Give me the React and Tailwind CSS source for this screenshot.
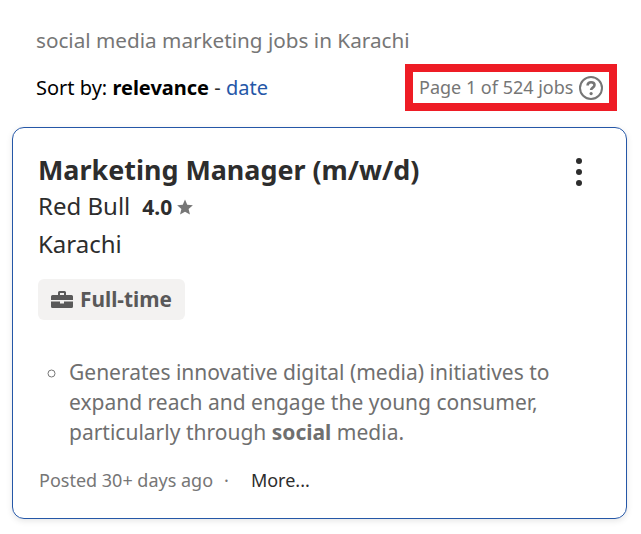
import React from "react";

const font = { fontFamily: '"Noto Sans", sans-serif' };

export default function App() {
  return (
    <div style={font} className="w-[641px] h-[534px] bg-white overflow-hidden pt-[25px]">
      <div className="pl-[36px] text-[20.7px] leading-[30px] text-[#767676]">social media marketing jobs in Karachi</div>
      <div className="flex items-center justify-between pl-[36px] pr-[24px] mt-[9px] h-[47px]">
        <div className="text-[20px] leading-[30px] text-[#000000]">
          Sort by: <b className="font-bold">relevance</b> <span className="text-[#2d2d2d]">-</span> <span className="text-[#2557a7]">date</span>
        </div>
        <div className="w-[212px] h-[47px] border-[8px] border-[#ee1c25] flex items-center pl-[6px] gap-[5px] text-[18px] text-[#767676]">
          <span>Page 1 of 524 jobs</span>
          <svg width="26" height="26" viewBox="0 0 26 26" fill="none">
            <circle cx="13" cy="13" r="11" stroke="#767676" strokeWidth="2" />
            <path d="M9.6 10.4c0-2 1.5-3.2 3.5-3.2s3.4 1.2 3.4 2.9c0 2.6-3.4 2.5-3.4 5" stroke="#767676" strokeWidth="2.6" fill="none" />
            <circle cx="13.1" cy="18.6" r="1.6" fill="#767676" />
          </svg>
        </div>
      </div>
      <div className="mt-[16px] ml-[12px] w-[615px] h-[392px] border border-[#2557a7] rounded-[12px] shadow-[0_2px_6px_rgba(0,0,0,0.1)] pl-[25px] pr-[24px] relative">
        <div className="text-[26.900px] leading-[36px] font-bold text-[#2d2d2d] mt-[24px]">Marketing Manager (m/w/d)</div>
        <div className="flex items-center h-[36px] text-[#2d2d2d] mt-[1px]">
          <span className="text-[24px] -mt-[2px]">Red Bull</span>
          <span className="text-[21px] font-bold ml-[12px] mt-[1px]">4.0</span>
          <svg className="ml-[4px]" width="18" height="18" viewBox="0 0 24 24" fill="#767676">
            <path d="M12 2l3 7 7.5.7-5.7 5 1.8 7.4L12 18.2 5.4 22.100l1.800-7.400-5.700-5L9 9z" />
          </svg>
        </div>
        <div className="text-[24px] leading-[36px] text-[#2d2d2d] mt-[1px]">Karachi</div>
        <div className="mt-[17px] w-[147px] h-[41px] bg-[#f3f2f1] rounded-[6px] flex items-center pl-[13px] gap-[7px] text-[20.800px] font-bold text-[#595959]">
          <svg width="22" height="20" viewBox="0 0 22 20" fill="#595959">
            <path d="M7 2.500A1.500 1.500 0 0 1 8.500 1h5A1.500 1.500 0 0 1 15 2.500V5h5.500A1.500 1.500 0 0 1 22 6.500V10H0V6.500A1.500 1.500 0 0 1 1.500 5H7zM9 3v2h4V3z" />
            <path d="M0 11.500h9V13.500h4V11.500h9v5A1.500 1.500 0 0 1 20.500 18h-19A1.500 1.500 0 0 1 0 16.500z" />
          </svg>
          <span>Full-time</span>
        </div>
        <ul className="mt-[37px] pl-[31px] pr-[40px] list-[circle] text-[21px] leading-[30px] text-[#6f6f6f] marker:text-[#767676]">
          <li>Generates innovative digital (media) initiatives to expand reach and engage the young consumer, particularly through <b className="font-bold">social</b> media.</li>
        </ul>
        <div className="flex items-center mt-[20px] text-[18px] leading-[27px]">
          <span className="text-[#767676] ml-[1px]">Posted 30+ days ago</span>
          <span className="text-[#767676] ml-[11px]">·</span>
          <span className="text-[#2d2d2d] ml-[22px]">More...</span>
        </div>
        <svg className="absolute right-[42px] top-[29px]" width="10" height="30" viewBox="0 0 10 30" fill="#2d2d2d">
          <circle cx="5" cy="4" r="3" />
          <circle cx="5" cy="15" r="3" />
          <circle cx="5" cy="26" r="3" />
        </svg>
      </div>
    </div>
  );
}
